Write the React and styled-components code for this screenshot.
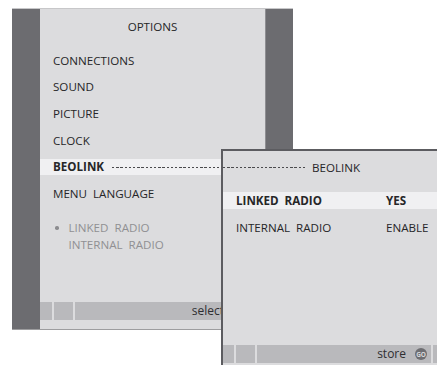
import React from 'react';
import styled, { createGlobalStyle } from 'styled-components';

const GlobalStyle = createGlobalStyle`
  html, body {
    margin: 0;
    padding: 0;
    background: #ffffff;
    overflow: hidden;
  }
  body {
    font-family: 'Open Sans', 'Noto Sans', sans-serif;
    color: #262628;
  }
`;

const mainMenu = ['CONNECTIONS', 'SOUND', 'PICTURE', 'CLOCK', 'BEOLINK', 'MENU LANGUAGE'];
const subMenu = [
  { label: 'LINKED RADIO', marked: true },
  { label: 'INTERNAL RADIO', marked: false },
];
const beolinkRows = [
  { label: 'LINKED RADIO', value: 'YES', active: true },
  { label: 'INTERNAL RADIO', value: 'ENABLE', active: false },
];

export default function App() {
  return (
    <>
      <GlobalStyle />
      <Stage>
        {/* OPTIONS menu, the one behind */}
        <Window>
          <SideBar />
          <Screen>
            <Title>OPTIONS</Title>
            <MenuList>
              {mainMenu.map((item) => (
                <MenuRow key={item} active={item === 'BEOLINK'}>
                  <span>{item}</span>
                  {item === 'BEOLINK' && <Dashes />}
                </MenuRow>
              ))}
            </MenuList>
            <SubList>
              {subMenu.map((s) => (
                <SubRow key={s.label}>
                  <Bullet visible={s.marked} />
                  {s.label}
                </SubRow>
              ))}
            </SubList>
            <StatusBar>
              <Segment w={12} />
              <Segment w={19} />
              <Segment grow>
                <StatusLabel>select</StatusLabel>
                <GoButton>GO</GoButton>
              </Segment>
              <Segment w={14} />
            </StatusBar>
          </Screen>
          <SideBar right />
        </Window>

        {/* BEOLINK submenu, popped over the options menu */}
        <Popup>
          <PopupTitle>
            <Dashes fixed={83} />
            <span>BEOLINK</span>
          </PopupTitle>
          <OptionList>
            {beolinkRows.map((r) => (
              <OptionRow key={r.label} active={r.active}>
                <span>{r.label}</span>
                <span>{r.value}</span>
              </OptionRow>
            ))}
          </OptionList>
          <StatusBar>
            <Segment w={11} />
            <Segment w={19} />
            <Segment grow>
              <StatusLabel>store</StatusLabel>
              <GoButton>GO</GoButton>
            </Segment>
            <Segment w={14} />
          </StatusBar>
        </Popup>
      </Stage>
    </>
  );
}

const Stage = styled.div`
  position: relative;
  padding: 8px 0 0 12px;
  width: 437px;
  height: 365px;
  box-sizing: border-box;
`;

const Window = styled.div`
  width: 281px;
  height: 322px;
  box-sizing: border-box;
  display: grid;
  grid-template-columns: 28px 1fr 28px;
  border-top: 1px solid #c7c7c9;
  border-bottom: 1px solid #9d9d9f;
`;

const SideBar = styled.div`
  background: #6c6c70;
  border-left: ${(props) => (props.right ? '1px solid #8e8e92' : 'none')};
`;

const Screen = styled.div`
  background: #dcdcde;
  display: flex;
  flex-direction: column;
  padding-top: 9px;
  font-size: 11.6px;
  word-spacing: 3px;
`;

const Title = styled.div`
  text-align: center;
  line-height: 17px;
  height: 17px;
`;

const MenuList = styled.div`
  display: flex;
  flex-direction: column;
  gap: 10.7px;
  margin-top: 17.5px;
`;

const MenuRow = styled.div`
  display: flex;
  align-items: center;
  height: 16px;
  line-height: 16px;
  padding-left: 13px;
  font-weight: ${(props) => (props.active ? 700 : 400)};
  background: ${(props) => (props.active ? '#f0f0f2' : 'transparent')};
`;

const Dashes = styled.div`
  flex: ${(props) => (props.fixed ? `0 0 ${props.fixed}px` : '1')};
  height: 1.5px;
  margin: ${(props) => (props.fixed ? '0 6px 0 0' : '0 0 0 8px')};
  background: repeating-linear-gradient(
    to right,
    #4a4a4d 0 2.5px,
    transparent 2.5px 4.2px
  );
`;

const SubList = styled.div`
  display: flex;
  flex-direction: column;
  margin-top: 17.5px;
  padding-left: 15px;
  color: #909093;
`;

const SubRow = styled.div`
  display: flex;
  align-items: center;
  line-height: 17px;
`;

const Bullet = styled.span`
  width: 3.5px;
  height: 3.5px;
  border-radius: 50%;
  margin-right: 10px;
  background: ${(props) => (props.visible ? '#8c8c8f' : 'transparent')};
`;

const StatusBar = styled.div`
  margin-top: auto;
  margin-bottom: 9px;
  height: 18px;
  display: flex;
  gap: 2px;
  font-size: 12px;
`;

const Segment = styled.div`
  background: #b9b9bc;
  flex: ${(props) => (props.grow ? '1' : `0 0 ${props.w}px`)};
  display: flex;
  align-items: center;
  justify-content: flex-end;
  padding-right: ${(props) => (props.grow ? '4px' : '0')};
`;

const StatusLabel = styled.span`
  color: #2e2e31;
  margin-right: 9px;
  line-height: 18px;
`;

const GoButton = styled.span`
  width: 12px;
  height: 12px;
  border-radius: 50%;
  background: #6e6e72;
  color: #d6d6d8;
  font-size: 6.5px;
  font-weight: 700;
  letter-spacing: -0.2px;
  word-spacing: 0;
  display: flex;
  align-items: center;
  justify-content: center;
`;

const Popup = styled.div`
  position: absolute;
  left: 221px;
  top: 149px;
  width: 228px;
  height: 225px;
  box-sizing: border-box;
  border: 2px solid #5c5c60;
  background: #dcdcde;
  display: flex;
  flex-direction: column;
  padding-top: 8px;
  font-size: 11.6px;
  word-spacing: 3px;
`;

const PopupTitle = styled.div`
  display: flex;
  align-items: center;
  line-height: 17px;
  height: 17px;
`;

const OptionList = styled.div`
  display: flex;
  flex-direction: column;
  gap: 11px;
  margin-top: 16px;
`;

const OptionRow = styled.div`
  display: grid;
  grid-template-columns: 150px 1fr;
  align-items: center;
  height: 16.5px;
  padding-left: 13px;
  font-weight: ${(props) => (props.active ? 700 : 400)};
  background: ${(props) => (props.active ? '#f0f0f2' : 'transparent')};
`;
